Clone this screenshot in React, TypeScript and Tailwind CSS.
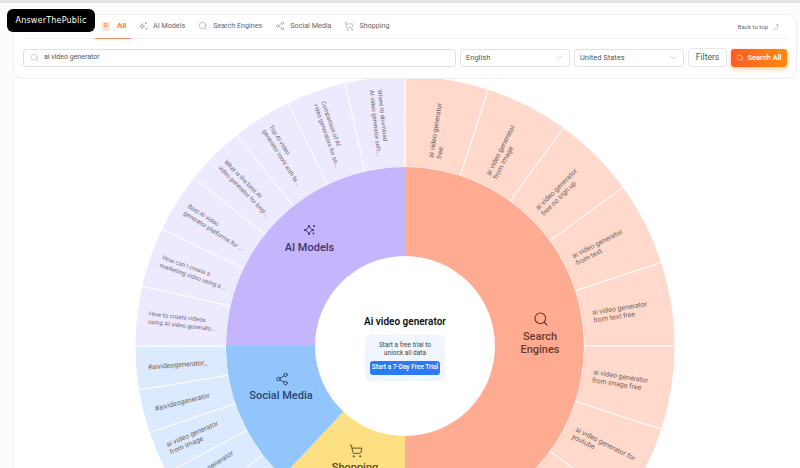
import { ChevronDown, CornerRightUp, Search, Share2, ShoppingCart } from "lucide-react";

const CX = 405;
const CY = 345;

const polar = (r: number, deg: number) => {
  const a = (deg * Math.PI) / 180;
  return [CX + r * Math.sin(a), CY - r * Math.cos(a)];
};

const wedge = (r0: number, r1: number, from: number, to: number) => {
  const [x0, y0] = polar(r1, from);
  const [x1, y1] = polar(r1, to);
  const [x2, y2] = polar(r0, to);
  const [x3, y3] = polar(r0, from);
  const large = to - from > 180 ? 1 : 0;
  return `M${x0} ${y0}A${r1} ${r1} 0 ${large} 1 ${x1} ${y1}L${x2} ${y2}A${r0} ${r0} 0 ${large} 0 ${x3} ${y3}Z`;
};

const sectors = [
  {
    from: 0,
    to: 180,
    mid: "#ffab91",
    outer: "#fed9cc",
    count: 10,
    small: false,
    labels: [
      ["ai video generator", "free"],
      ["ai video generator", "from image"],
      ["ai video generator", "free no sign up"],
      ["ai video generator", "from text"],
      ["ai video generator", "from text free"],
      ["ai video generator", "from image free"],
      ["ai video generator for", "youtube"],
    ],
  },
  { from: 180, to: 223.2, mid: "#fde083", outer: "#fef3c7", count: 5, small: false, labels: [] },
  {
    from: 223.2,
    to: 270,
    mid: "#93c5fd",
    outer: "#dbeafe",
    count: 5,
    small: false,
    // listed from the left edge downwards
    labels: [
      ["#aivideogenerator_"],
      ["#aivideogenerator"],
      ["ai video generator", "from image"],
      ["ai video generator", "free"],
    ],
    reverse: true,
  },
  {
    from: 270,
    to: 360,
    mid: "#c4b5fd",
    outer: "#ede9fe",
    count: 7,
    small: true,
    labels: [
      ["How to create videos", "using AI video generato..."],
      ["How can I create a", "marketing video using a..."],
      ["Best AI video", "generator platforms for ..."],
      ["What is the best AI", "video generator for begi..."],
      ["Top AI video", "generator tools with fe..."],
      ["Comparison of AI", "video generators for so..."],
      ["Where to download", "AI video generator soft..."],
    ],
  },
];

const Sunburst = () => (
  <svg viewBox="14 78 786 390" className="block h-[390px] w-[786px]">
    {sectors.map((s) => {
      const step = (s.to - s.from) / s.count;
      return (
        <g key={s.from}>
          {Array.from({ length: s.count }).map((_, i) => (
            <path
              key={i}
              d={wedge(179, 270, s.from + i * step, s.from + (i + 1) * step)}
              fill={s.outer}
              stroke="#ffffff"
              strokeWidth="1"
            />
          ))}
          <path d={wedge(90, 179, s.from, s.to)} fill={s.mid} />
          {s.labels.map((lines, i) => {
            const angle = s.reverse ? s.to - (i + 0.5) * step : s.from + (i + 0.5) * step;
            const right = angle < 180;
            const [x, y] = polar(right ? 190 : 258, angle);
            const rot = right ? angle - 90 : angle - 270;
            const first = lines.length > 1 ? -1.5 : 2.5;
            return (
              <g key={i} transform={`translate(${x} ${y}) rotate(${rot})`}>
                {lines.map((line, j) => (
                  <text
                    key={j}
                    y={first + j * 8}
                    className={
                      s.small
                        ? "fill-[#6e6a72] font-['Roboto',sans-serif] text-[6.1px]"
                        : "fill-[#6e6664] font-['Roboto',sans-serif] text-[7px]"
                    }
                  >
                    {line}
                  </text>
                ))}
              </g>
            );
          })}
        </g>
      );
    })}

    <path
      d="M309 224c.7 3.4 1.6 4.3 5 5-3.4.7-4.3 1.6-5 5-.7-3.4-1.6-4.3-5-5 3.4-.7 4.3-1.6 5-5z"
      fill="none"
      stroke="#3b2f6b"
      strokeWidth="1"
    />
    <circle cx="314" cy="225" r="1" fill="#3b2f6b" />
    <circle cx="313.5" cy="232.5" r="0.9" fill="#3b2f6b" />
    <text x="309.5" y="250" textAnchor="middle" className="fill-[#3f3566] font-['Roboto',sans-serif] text-[11px] font-medium">
      AI Models
    </text>

    <Search x={533} y={310} size={16} color="#6b2f1f" strokeWidth={1.6} />
    <text x="540" y="339" textAnchor="middle" className="fill-[#6b3a2c] font-['Roboto',sans-serif] text-[11px] font-medium">
      Search
    </text>
    <text x="540" y="352" textAnchor="middle" className="fill-[#6b3a2c] font-['Roboto',sans-serif] text-[11px] font-medium">
      Engines
    </text>

    <Share2 x={275} y={371} size={14} color="#27466e" strokeWidth={1.6} />
    <text x="281" y="398" textAnchor="middle" className="fill-[#27466e] font-['Roboto',sans-serif] text-[11px] font-medium">
      Social Media
    </text>

    <ShoppingCart x={349} y={443} size={14} color="#5c4d1e" strokeWidth={1.6} />
    <text x="355" y="470" textAnchor="middle" className="fill-[#5c4d1e] font-['Roboto',sans-serif] text-[11px] font-medium">
      Shopping
    </text>
  </svg>
);

const tabs = [
  { label: "AI Models", icon: "spark" },
  { label: "Search Engines", icon: "search" },
  { label: "Social Media", icon: "share" },
  { label: "Shopping", icon: "cart" },
];

const TabIcon = ({ name }: { name: string }) => {
  if (name === "search") return <Search size={10} strokeWidth={1} className="text-[#777]" />;
  if (name === "share") return <Share2 size={10} strokeWidth={1} className="text-[#777]" />;
  if (name === "cart") return <ShoppingCart size={10} strokeWidth={1} className="text-[#777]" />;
  return (
    <svg viewBox="0 0 12 12" className="h-[10px] w-[10px] text-[#777]" fill="none" stroke="currentColor" strokeWidth="0.8">
      <path d="M5 3.2c.4 2 1 2.6 3 3-2 .4-2.6 1-3 3-.4-2-1-2.6-3-3 2-.4 2.6-1 3-3z" />
      <circle cx="9.5" cy="2.5" r="0.7" />
      <circle cx="10" cy="9.5" r="0.7" />
    </svg>
  );
};

const Select = ({ value }: { value: string }) => (
  <div className="flex h-[18px] w-[110px] items-center justify-between rounded-[3px] border border-[#e3e3e3] bg-white px-[5px] text-[7.5px] text-[#555]">
    {value}
    <ChevronDown size={9} strokeWidth={1} className="text-[#888]" />
  </div>
);

export default function App() {
  return (
    <div className="relative h-[468px] w-[800px] overflow-hidden bg-[#fcfcfc] font-['Roboto',sans-serif]">
      <div className="h-[3px] bg-[#e4e4e4]" />

      <div className="absolute left-[7px] top-[9px] z-10 flex h-[23px] w-[88px] items-center justify-center rounded-[6px] bg-black font-['DejaVu_Sans',sans-serif] text-[8px] tracking-[0.2px] text-white">
        AnswerThePublic
      </div>

      <div className="ml-[13px] mr-[3px] mt-[11px] h-[65px] rounded-[10px] border border-[#eeeeee] bg-white pl-[9px] pr-[9px]">
        <div className="flex h-[24px] items-center border-b border-[#eeeeee] pl-[72px]">
          <div className="flex h-[24px] w-[36px] items-center gap-[7px] border-b border-[#f0875f] pl-[7px] text-[8px] font-medium text-[#f0703c]">
            <span className="flex h-[9px] w-[8px] items-center justify-center bg-[#fde3d8] text-[5px]">D</span>
            All
          </div>
          <div className="ml-[7px] flex items-center gap-[13px]">
            {tabs.map((t) => (
              <div key={t.label} className="flex items-center gap-[5px] text-[7.2px] text-[#666]">
                <TabIcon name={t.icon} />
                {t.label}
              </div>
            ))}
          </div>
          <div className="ml-auto flex items-center gap-[5px] pr-[7px] text-[6px] text-[#666]">
            Back to top
            <CornerRightUp size={7} strokeWidth={1.2} />
          </div>
        </div>
        <div className="mt-[9px] flex items-center gap-[4px]">
          <div className="flex h-[18px] w-[433px] items-center gap-[5px] rounded-[3px] border border-[#e0e0e0] bg-white pl-[6px] text-[7px] text-[#555]">
            <Search size={9} strokeWidth={1} className="text-[#888]" />
            ai video generator
          </div>
          <Select value="English" />
          <Select value="United States" />
          <div className="flex h-[19px] w-[39px] items-center justify-center rounded-[3px] border border-[#e8e8e8] bg-white text-[8.5px] text-[#555]">
            Filters
          </div>
          <div className="flex h-[18px] w-[56px] items-center justify-center gap-[3px] rounded-[3px] bg-gradient-to-r from-[#ff5a22] to-[#ff8a0a] text-[7.5px] font-semibold text-white shadow-[0_2px_5px_rgba(255,130,40,0.45)]">
            <Search size={8} strokeWidth={1.6} />
            Search All
          </div>
        </div>
      </div>

      <div className="relative ml-[13px] h-[390px] border-l border-[#ececec] bg-white">
        <Sunburst />
        <div className="absolute left-[350px] top-[236px] flex w-[82px] flex-col items-center">
          <div className="whitespace-nowrap text-[10px] font-semibold leading-[14px] text-[#111]">Ai video generator</div>
          <div className="mt-[6px] flex h-[46px] w-[80px] flex-col items-center rounded-[5px] bg-[#eff6ff] pt-[6px]">
            <div className="text-center text-[6.5px] leading-[8px] text-[#444]">
              Start a free trial to
              <br />
              unlock all data
            </div>
            <div className="mt-[4px] flex h-[14px] w-[70px] items-center justify-center whitespace-nowrap rounded-[3px] bg-[#2b7bf5] text-[6.5px] font-medium text-white">
              Start a 7-Day Free Trial
            </div>
          </div>
        </div>
      </div>
    </div>
  );
}
